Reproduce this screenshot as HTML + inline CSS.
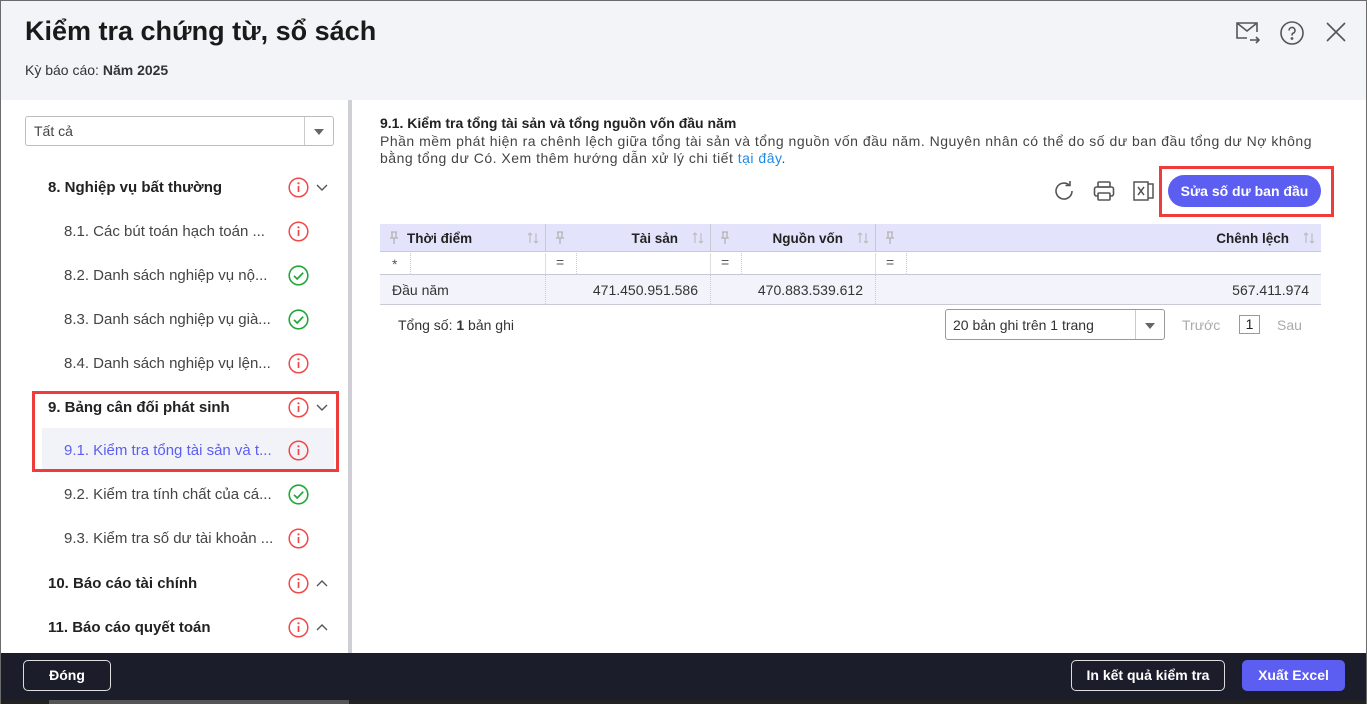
<!DOCTYPE html>
<html><head><meta charset="utf-8"><style>
*{box-sizing:border-box;margin:0;padding:0}
body{width:1367px;height:704px;overflow:hidden;font-family:"Liberation Sans",sans-serif;color:#212121;background:#fff;position:relative}
.a{position:absolute}
.frame{left:0;top:0;width:1367px;height:704px;border:1px solid #6b6b6b;border-bottom:none}
.hdr{left:1px;top:1px;width:1365px;height:99px;background:#f3f4f7}
h1{position:absolute;left:25px;top:16px;font-size:27px;font-weight:bold;color:#1a1a1a}
.sub{left:25px;top:62px;font-size:14px;color:#333}
.side{left:1px;top:100px;width:347px;height:553px;background:#fff}
.vbar{left:348px;top:100px;width:4px;height:553px;background:#cfd0d6}
.item{position:absolute;font-size:15px;color:#444;white-space:nowrap}
.h{font-weight:bold;color:#222;left:48px}
.s{left:64px}
.ic{position:absolute;left:288px;width:21px;height:21px}
.ch{position:absolute;left:315px;width:14px;height:14px}
.foot{left:1px;top:653px;width:1365px;height:47px;background:#1c1d2b}
.btn{position:absolute;border-radius:5px;font-size:14px;font-weight:bold;color:#fff;text-align:center}
.th{position:absolute;top:224px;height:28px;background:#e3e4fb;font-size:13.5px;font-weight:bold;color:#222;border-bottom:1px solid #c8c9d6}
.pin{position:absolute;left:8px;top:7px}
.srt{position:absolute;right:6px;top:8px}
</style></head><body>
<div class="a hdr"></div>
<h1>Kiểm tra chứng từ, sổ sách</h1>
<div class="a sub">Kỳ báo cáo: <b>Năm 2025</b></div>
<svg class="a" style="left:1234px;top:20px" width="28" height="26" viewBox="0 0 28 26" fill="none" stroke="#555" stroke-width="1.6"><path d="M13 18H3V3h20v9"/><path d="M3 3l10 8 10-8"/><path d="M16 20h9M22 17l3 3-3 3"/></svg>
<svg class="a" style="left:1279px;top:20px" width="26" height="26" viewBox="0 0 26 26" fill="none" stroke="#555" stroke-width="1.6"><circle cx="13" cy="13" r="11"/><path d="M10 10.5a3 3 0 1 1 4 2.8c-1 .4-1 1.2-1 2.2"/><circle cx="13" cy="18.5" r=".6" fill="#555"/></svg>
<svg class="a" style="left:1325px;top:21px" width="22" height="22" viewBox="0 0 22 22" stroke="#555" stroke-width="1.6"><path d="M2 2l18 18M20 2L2 20"/></svg>

<div class="a side"></div>
<div class="a vbar"></div>
<div class="a" style="left:25px;top:116px;width:309px;height:30px;border:1px solid #bdbdbd;border-radius:3px;font-size:14px;color:#444;padding:6px 8px">Tất cả<div class="a" style="left:278px;top:0;width:1px;height:28px;background:#ccc"></div><div class="a" style="left:288px;top:12px;border-left:5px solid transparent;border-right:5px solid transparent;border-top:6px solid #666"></div></div>

<div class="a" style="left:42px;top:428px;width:292px;height:43px;background:#f2f3f8"></div>
<div class="a" style="left:32px;top:391px;width:307px;height:81px;border:3px solid #ee3b3b"></div>

<div class="item h" style="top:179px">8. Nghiệp vụ bất thường</div>
<div class="item s" style="top:223px">8.1. Các bút toán hạch toán ...</div>
<div class="item s" style="top:267px">8.2. Danh sách nghiệp vụ nộ...</div>
<div class="item s" style="top:311px">8.3. Danh sách nghiệp vụ già...</div>
<div class="item s" style="top:355px">8.4. Danh sách nghiệp vụ lện...</div>
<div class="item h" style="top:399px">9. Bảng cân đối phát sinh</div>
<div class="item s" style="top:442px;color:#5b5ef0">9.1. Kiểm tra tổng tài sản và t...</div>
<div class="item s" style="top:486px">9.2. Kiểm tra tính chất của cá...</div>
<div class="item s" style="top:530px">9.3. Kiểm tra số dư tài khoản ...</div>
<div class="item h" style="top:575px">10. Báo cáo tài chính</div>
<div class="item h" style="top:619px">11. Báo cáo quyết toán</div>

<svg width="0" height="0" style="position:absolute"><defs>
<g id="inf"><circle cx="10.5" cy="10.5" r="9.3" fill="none" stroke="#f04848" stroke-width="1.5"/><path d="M10.5 9v6" stroke="#f04848" stroke-width="1.7"/><circle cx="10.5" cy="6.3" r="1.1" fill="#f04848"/></g>
<g id="ok"><circle cx="10.5" cy="10.5" r="9.3" fill="none" stroke="#1fa83a" stroke-width="1.6"/><path d="M6 10.8l3.2 3.2 6-6.3" fill="none" stroke="#1fa83a" stroke-width="1.7"/></g>
<path id="dn" d="M2 5l5 5 5-5" fill="none" stroke="#555" stroke-width="1.4"/>
<path id="up" d="M2 10l5-5 5 5" fill="none" stroke="#555" stroke-width="1.4"/>
<g id="pn" fill="none" stroke="#aaa" stroke-width="1.1"><path d="M3 1h6M4 1v6h4V1M2 7h8M6 7v6"/></g>
<g id="so" fill="none" stroke="#bbb" stroke-width="1.1"><path d="M3 11V1M1 3l2-2 2 2M9 1v10M7 9l2 2 2-2"/></g>
</defs></svg>
<svg class="ic" style="top:177px"><use href="#inf"/></svg>
<svg class="ic" style="top:221px"><use href="#inf"/></svg>
<svg class="ic" style="top:265px"><use href="#ok"/></svg>
<svg class="ic" style="top:309px"><use href="#ok"/></svg>
<svg class="ic" style="top:353px"><use href="#inf"/></svg>
<svg class="ic" style="top:397px"><use href="#inf"/></svg>
<svg class="ic" style="top:440px"><use href="#inf"/></svg>
<svg class="ic" style="top:484px"><use href="#ok"/></svg>
<svg class="ic" style="top:528px"><use href="#inf"/></svg>
<svg class="ic" style="top:573px"><use href="#inf"/></svg>
<svg class="ic" style="top:617px"><use href="#inf"/></svg>
<svg class="ch" style="top:180px"><use href="#dn"/></svg>
<svg class="ch" style="top:400px"><use href="#dn"/></svg>
<svg class="ch" style="top:576px"><use href="#up"/></svg>
<svg class="ch" style="top:620px"><use href="#up"/></svg>

<div class="a" style="left:380px;top:115px;font-size:14px;font-weight:bold;color:#222">9.1. Kiểm tra tổng tài sản và tổng nguồn vốn đầu năm</div>
<div class="a" style="left:380px;top:133px;width:945px;font-size:14px;line-height:17px;color:#444;letter-spacing:0.5px;white-space:nowrap">Phần mềm phát hiện ra chênh lệch giữa tổng tài sản và tổng nguồn vốn đầu năm. Nguyên nhân có thể do số dư ban đầu tổng dư Nợ không<br>bằng tổng dư Có. Xem thêm hướng dẫn xử lý chi tiết <span style="color:#1e88e5">tại đây</span>.</div>

<svg class="a" style="left:1052px;top:179px" width="24" height="24" viewBox="0 0 24 24" fill="none" stroke="#555" stroke-width="1.6"><path d="M20 12a8 8 0 1 1-3-6.2"/><path d="M18 2v4.5h-4.5"/></svg>
<svg class="a" style="left:1092px;top:179px" width="24" height="24" viewBox="0 0 24 24" fill="none" stroke="#555" stroke-width="1.6"><rect x="6" y="3" width="12" height="5" rx="1"/><rect x="2.5" y="8" width="19" height="9" rx="2"/><rect x="6" y="14" width="12" height="7" rx="1" fill="#fff"/></svg>
<svg class="a" style="left:1132px;top:179px" width="24" height="24" viewBox="0 0 24 24" fill="none" stroke="#555" stroke-width="1.5"><rect x="2" y="3" width="14" height="18"/><path d="M16 5h5v14h-5"/><path d="M6 8l6 8M12 8l-6 8"/></svg>
<div class="a" style="left:1159px;top:166px;width:175px;height:51px;border:3px solid #ee3b3b"></div>
<div class="btn" style="left:1168px;top:175px;width:153px;height:32px;border-radius:16px;background:#5b5ef0;line-height:32px;font-size:14px">Sửa số dư ban đầu</div>

<div class="th" style="left:380px;width:165px"><svg class="pin" width="12" height="14"><use href="#pn"/></svg><span class="a" style="left:27px;top:7px">Thời điểm</span><svg class="srt" width="12" height="12"><use href="#so"/></svg></div>
<div class="th" style="left:545px;width:165px;border-left:1px solid #c8c9d6"><svg class="pin" width="12" height="14"><use href="#pn"/></svg><span class="a" style="right:32px;top:7px">Tài sản</span><svg class="srt" width="12" height="12"><use href="#so"/></svg></div>
<div class="th" style="left:710px;width:165px;border-left:1px solid #c8c9d6"><svg class="pin" width="12" height="14"><use href="#pn"/></svg><span class="a" style="right:32px;top:7px">Nguồn vốn</span><svg class="srt" width="12" height="12"><use href="#so"/></svg></div>
<div class="th" style="left:875px;width:446px;border-left:1px solid #c8c9d6"><svg class="pin" width="12" height="14"><use href="#pn"/></svg><span class="a" style="right:32px;top:7px">Chênh lệch</span><svg class="srt" width="12" height="12"><use href="#so"/></svg></div>
<div class="a" style="left:380px;top:253px;width:941px;height:22px;border-bottom:1px solid #c8c9d6;font-size:14px;color:#555">
<span class="a" style="left:12px;top:3px">*</span><span class="a" style="left:176px;top:1px">=</span><span class="a" style="left:341px;top:1px">=</span><span class="a" style="left:506px;top:1px">=</span>
<div class="a" style="left:30px;top:0;height:21px;border-left:1px dotted #ccc"></div><div class="a" style="left:165px;top:0;height:21px;border-left:1px solid #ddd"></div><div class="a" style="left:196px;top:0;height:21px;border-left:1px dotted #ccc"></div><div class="a" style="left:330px;top:0;height:21px;border-left:1px solid #ddd"></div><div class="a" style="left:361px;top:0;height:21px;border-left:1px dotted #ccc"></div><div class="a" style="left:495px;top:0;height:21px;border-left:1px solid #ddd"></div><div class="a" style="left:526px;top:0;height:21px;border-left:1px dotted #ccc"></div></div>
<div class="a" style="left:380px;top:275px;width:941px;height:30px;background:#f3f4fb;border-bottom:1px solid #c8c9d6;font-size:14px;color:#333">
<span class="a" style="left:12px;top:7px">Đầu năm</span><span class="a" style="right:623px;top:7px">471.450.951.586</span><span class="a" style="right:458px;top:7px">470.883.539.612</span><span class="a" style="right:12px;top:7px">567.411.974</span>
<div class="a" style="left:165px;top:0;height:29px;border-left:1px dotted #ccc"></div><div class="a" style="left:330px;top:0;height:29px;border-left:1px dotted #ccc"></div><div class="a" style="left:495px;top:0;height:29px;border-left:1px dotted #ccc"></div></div>

<div class="a" style="left:398px;top:317px;font-size:14px;color:#333">Tổng số: <b>1</b> bản ghi</div>
<div class="a" style="left:945px;top:309px;width:220px;height:31px;border:1px solid #999;border-radius:3px;font-size:14px;color:#333;padding:7px 7px">20 bản ghi trên 1 trang<div class="a" style="left:189px;top:0;width:1px;height:29px;background:#ccc"></div><div class="a" style="left:199px;top:13px;border-left:5px solid transparent;border-right:5px solid transparent;border-top:6px solid #666"></div></div>
<div class="a" style="left:1182px;top:317px;font-size:14px;color:#aaa">Trước</div>
<div class="a" style="left:1239px;top:315px;width:21px;height:19px;border:1px solid #999;font-size:14px;text-align:center;line-height:17px">1</div>
<div class="a" style="left:1277px;top:317px;font-size:14px;color:#aaa">Sau</div>

<div class="a foot"></div>
<div class="btn" style="left:23px;top:660px;width:88px;height:31px;border:1px solid #ddd;line-height:29px">Đóng</div>
<div class="btn" style="left:1071px;top:660px;width:154px;height:31px;border:1px solid #ddd;line-height:29px">In kết quả kiểm tra</div>
<div class="btn" style="left:1242px;top:660px;width:103px;height:31px;background:#5b5ef0;line-height:31px">Xuất Excel</div>
<div class="a" style="left:1px;top:700px;width:1365px;height:4px;background:#222"></div>
<div class="a" style="left:49px;top:700px;width:300px;height:4px;background:#555"></div>
<div class="a frame"></div>
</body></html>
